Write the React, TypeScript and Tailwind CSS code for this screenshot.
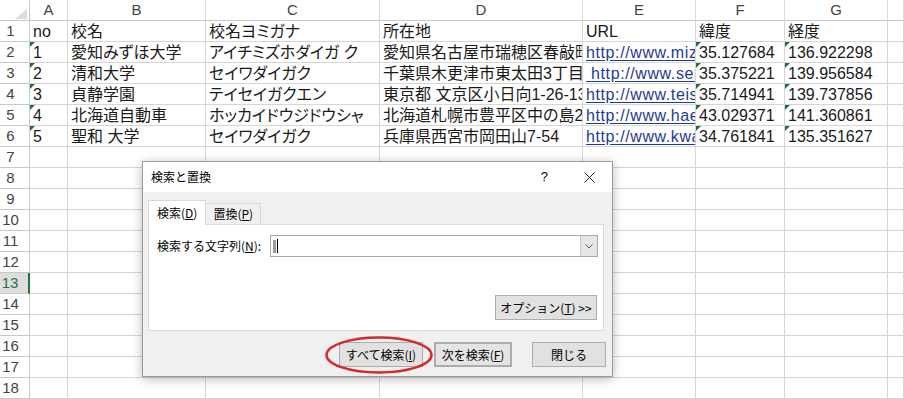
import React from "react";

const cellFont = "font-['Liberation_Sans','Noto_Sans_CJK_JP',sans-serif]";

const columns = ["A", "B", "C", "D", "E", "F", "G", ""];

type Row = {
  no: string;
  name: string;
  kana: string;
  addr: string;
  url: string;
  lat: string;
  lng: string;
  mark?: boolean;
};

const rows: Row[] = [
  { no: "no", name: "校名", kana: "校名ヨミガナ", addr: "所在地", url: "URL", lat: "緯度", lng: "経度" },
  { no: "1", name: "愛知みずほ大学", kana: "アイチミズホダイガ ク", addr: "愛知県名古屋市瑞穂区春敲町2-13", url: "http://www.mizuho-c.ac.jp/", lat: "35.127684", lng: "136.922298", mark: true },
  { no: "2", name: "清和大学", kana: "セイワダイガク", addr: "千葉県木更津市東太田3丁目4番1号", url: " http://www.seiwa-univ.ac.jp/", lat: "35.375221", lng: "139.956584", mark: true },
  { no: "3", name: "貞静学園", kana: "テイセイガクエン", addr: "東京都 文京区小日向1-26-13", url: "http://www.teisei.ac.jp/", lat: "35.714941", lng: "139.737856", mark: true },
  { no: "4", name: "北海道自動車", kana: "ホッカイドウジドウシャ", addr: "北海道札幌市豊平区中の島2条6丁目", url: "http://www.haedu.ac.jp/", lat: "43.029371", lng: "141.360861", mark: true },
  { no: "5", name: "聖和 大学", kana: "セイワダイガク", addr: "兵庫県西宮市岡田山7-54", url: "http://www.kwansei.ac.jp/", lat: "34.761841", lng: "135.351627", mark: true },
];

function Mark() {
  return (
    <span className="absolute left-0 top-0 h-0 w-0 border-t-[5px] border-r-[5px] border-t-[#1e7145] border-r-transparent" />
  );
}

function Cell({ children, mark, link }: { children?: React.ReactNode; mark?: boolean; link?: boolean }) {
  return (
    <div className="relative h-[21px] overflow-hidden whitespace-pre border-r border-b border-[#d6d6d6] pl-[3px] pt-[1px] text-[16px] leading-[20px] text-[#1a1a1a] [font-feature-settings:'palt']">
      {mark && <Mark />}
      {link ? <span className="tracking-[0.6px] text-[#1f3a96] underline underline-offset-2">{children}</span> : children}
    </div>
  );
}

function RowHead({ n, active }: { n: number; active?: boolean }) {
  return (
    <div
      className={
        "flex h-[21px] items-center justify-center border-b pr-[8px] text-[15px] font-['Liberation_Sans',sans-serif] " +
        (active
          ? "border-r-2 border-r-[#217346] border-b-[#c8c8c8] bg-[#dedede] text-[#2f6b4f]"
          : "border-r border-[#c8c8c8] bg-white text-[#444]")
      }
    >
      {n}
    </div>
  );
}

function Sheet() {
  const body: React.ReactNode[] = [];
  for (let r = 1; r <= 18; r++) {
    const d = rows[r - 1];
    body.push(<RowHead key={"h" + r} n={r} active={r === 13} />);
    if (d) {
      const mark = d.mark;
      body.push(
        <Cell key={r + "a"} mark={mark}>{d.no}</Cell>,
        <Cell key={r + "b"}>{d.name}</Cell>,
        <Cell key={r + "c"}>{d.kana}</Cell>,
        <Cell key={r + "d"}>{d.addr}</Cell>,
        <Cell key={r + "e"} link={r > 1}>{d.url}</Cell>,
        <Cell key={r + "f"} mark={mark}>{d.lat}</Cell>,
        <Cell key={r + "g"} mark={mark}>{d.lng}</Cell>,
        <Cell key={r + "h"} />
      );
    } else {
      for (let c = 0; c < 8; c++) body.push(<Cell key={r + "-" + c} />);
    }
  }

  return (
    <div className={"grid grid-cols-[30px_38px_138px_174px_203px_113px_89px_103px_1fr] bg-white " + cellFont}>
      <div className="relative h-[21px] border-r border-b border-[#c8c8c8] bg-white">
        <svg className="absolute left-[15px] top-[9px]" width="12" height="10" viewBox="0 0 12 10">
          <polygon points="12,0 12,10 0,10" fill="#dcdcdc" />
        </svg>
      </div>
      {columns.map((c, i) => (
        <div
          key={i}
          className="flex h-[21px] items-center justify-center border-r border-b border-r-[#dadada] border-b-[#c8c8c8] pt-[1px] text-[15px] text-[#444] font-['Liberation_Sans',sans-serif]"
        >
          {c}
        </div>
      ))}
      {body}
    </div>
  );
}

function Btn({ children, className = "" }: { children: React.ReactNode; className?: string }) {
  return (
    <div className={"flex h-[25px] items-center justify-center border border-[#adadad] bg-[#e1e1e1] text-[12px] text-black " + className}>
      {children}
    </div>
  );
}

function FindDialog() {
  return (
    <div className="absolute left-[142px] top-[161px] flex h-[216px] w-[471px] flex-col border border-[#9b9b9b] bg-[#f0f0f0] font-['Noto_Sans_CJK_JP',sans-serif] text-[12px] text-black shadow-[0_2px_10px_rgba(0,0,0,0.28)]">
      <div className="flex h-[30px] items-center bg-white pl-[8px]">
        <span className="text-[12px]">検索と置換</span>
        <span className="ml-auto mr-[36px] text-[13px] font-['Liberation_Sans',sans-serif]">?</span>
        <svg className="mr-[17px]" width="11" height="11" viewBox="0 0 11 11">
          <path d="M0.5 0.5L10.5 10.5M10.5 0.5L0.5 10.5" stroke="#222" strokeWidth="1" />
        </svg>
      </div>

      <div className="flex flex-col pl-[5px] pr-[8px] pt-[8px]">
        <div className="flex items-end">
          <div className="relative z-10 -mb-px flex h-[25px] items-center border border-b-0 border-[#d9d9d9] bg-white px-[8px]">
            検索(<span className="underline">D</span>)
          </div>
          <div className="flex h-[21px] items-center border border-b-0 border-l-0 border-[#d9d9d9] bg-[#f0f0f0] px-[7px]">
            置換(<span className="underline">P</span>)
          </div>
        </div>
        <div className="flex h-[107px] flex-col border border-[#d9d9d9] bg-white">
          <div className="mt-[10px] flex items-center pl-[8px]">
            <div className="w-[113px] whitespace-nowrap">
              検索する文字列(<span className="underline">N</span>):
            </div>
            <div className="flex h-[22px] w-[328px] items-stretch border border-[#a9a9a9] bg-white">
              <div className="flex flex-1 items-center pl-[2px]">
                <span className="h-[13px] w-[3px] bg-[#9c9c9c]" />
                <span className="ml-[1px] h-[14px] w-[1px] bg-black" />
              </div>
              <div className="flex w-[17px] items-center justify-center border-l border-[#c4c4c4] bg-[#e6e6e6]">
                <svg width="8" height="5" viewBox="0 0 8 5">
                  <path d="M0.5 0.5L4 4L7.5 0.5" fill="none" stroke="#606060" strokeWidth="1" />
                </svg>
              </div>
            </div>
          </div>
          <Btn className="mb-[10px] mr-[6px] mt-auto h-[23px] w-[102px] self-end">
            オプション(<span className="underline">T</span>) &gt;&gt;
          </Btn>
        </div>
      </div>

      <div className="mt-[11px] flex justify-end pr-[6px]">
        <Btn className="w-[84px]">
          すべて検索(<span className="underline">I</span>)
        </Btn>
        <Btn className="ml-[11px] w-[78px] border-2 border-[#0078d7] bg-[#e5e5e5]">
          次を検索(<span className="underline">F</span>)
        </Btn>
        <Btn className="ml-[20px] w-[74px]">閉じる</Btn>
      </div>
    </div>
  );
}

export default function App() {
  return (
    <div className="relative h-[399px] w-[904px] overflow-hidden bg-white">
      <Sheet />
      <FindDialog />
      <svg className="absolute left-[324px] top-[335px]" width="110" height="40" viewBox="0 0 110 40">
        <ellipse cx="55" cy="20" rx="52.5" ry="17.5" fill="none" stroke="#d42a2a" strokeWidth="2.5" />
      </svg>
    </div>
  );
}
